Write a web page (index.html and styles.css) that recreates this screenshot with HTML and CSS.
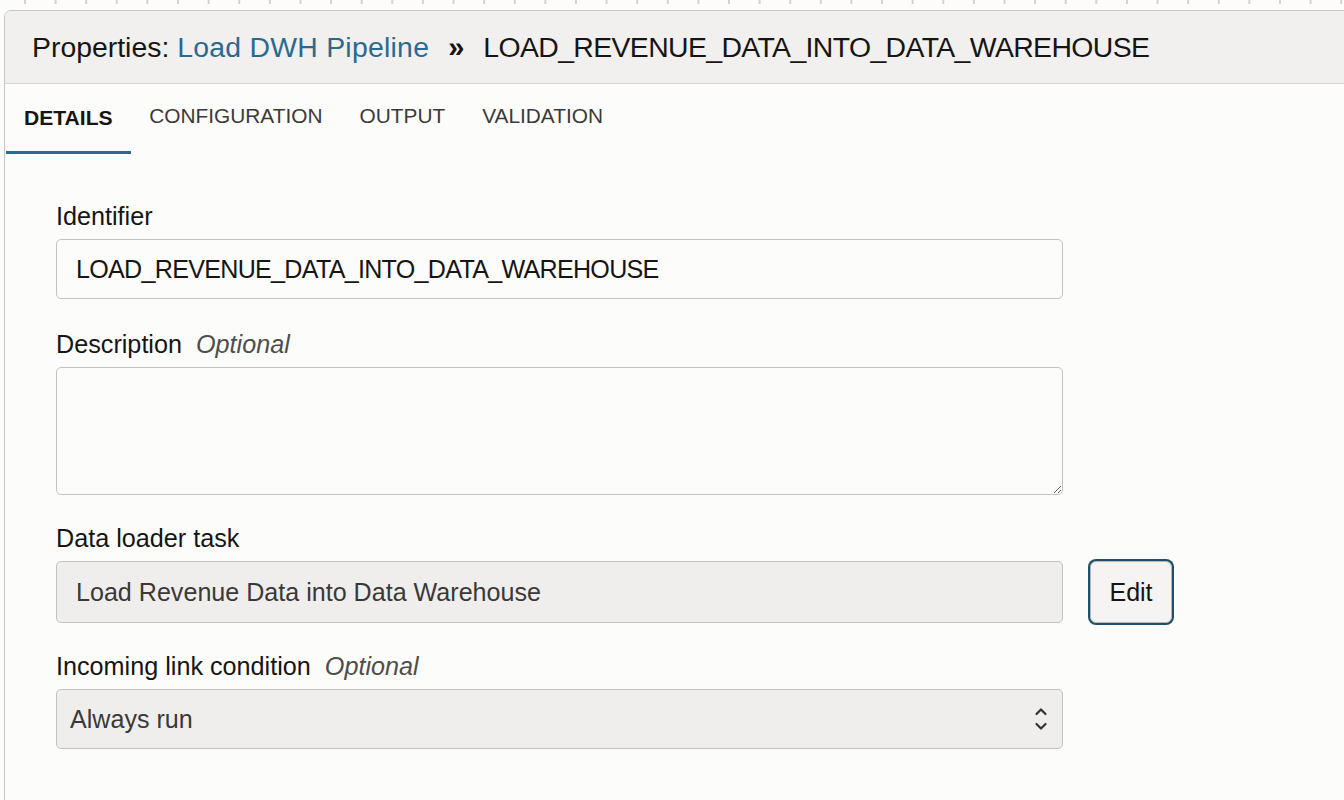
FILE: index.html
```html
<!DOCTYPE html>
<html lang="en">
<head>
<meta charset="utf-8">
<title>Properties: Load DWH Pipeline</title>
<link rel="stylesheet" href="styles.css">
</head>
<body>
<div class="canvas-strip"></div>
<section class="panel">
  <header class="panel-header">
    <h1 class="panel-title">Properties: <a class="crumb-link" href="#">Load DWH Pipeline</a><span class="crumb-sep">»</span><span class="caps-title">LOAD_REVENUE_DATA_INTO_DATA_WAREHOUSE</span></h1>
  </header>
  <nav class="tabs">
    <div class="tab tab-active">DETAILS</div>
    <div class="tab">CONFIGURATION</div>
    <div class="tab">OUTPUT</div>
    <div class="tab">VALIDATION</div>
  </nav>
  <div class="panel-body">
    <div class="field field-id">
      <label class="field-label">Identifier</label>
      <div class="text-input"><span class="caps-value">LOAD_REVENUE_DATA_INTO_DATA_WAREHOUSE</span></div>
    </div>
    <div class="field">
      <label class="field-label">Description <span class="optional">Optional</span></label>
      <textarea class="text-area"></textarea>
    </div>
    <div class="field">
      <label class="field-label">Data loader task</label>
      <div class="task-row">
        <div class="text-input text-input-disabled">Load Revenue Data into Data Warehouse</div>
        <button class="edit-btn">Edit</button>
      </div>
    </div>
    <div class="field">
      <label class="field-label">Incoming link condition <span class="optional">Optional</span></label>
      <div class="select-box">
        <span class="select-value">Always run</span>
        <svg class="select-chevrons" width="14" height="26" viewBox="0 0 14 26" aria-hidden="true">
          <path d="M2.5 8 L7 3.5 L11.5 8" fill="none" stroke="#333" stroke-width="2.2" stroke-linecap="round" stroke-linejoin="round"/>
          <path d="M2.5 18 L7 22.5 L11.5 18" fill="none" stroke="#333" stroke-width="2.2" stroke-linecap="round" stroke-linejoin="round"/>
        </svg>
      </div>
    </div>
  </div>
</section>
</body>
</html>
```

FILE: styles.css
```css
html, body {
  margin: 0;
  padding: 0;
}

body {
  background: #fcfcfb;
  font-family: "Liberation Sans", Arial, sans-serif;
  color: #161513;
  overflow: hidden;
  height: 800px;
}

.canvas-strip {
  height: 10px;
  background-image: linear-gradient(to right, #d3d2d0 2px, transparent 2px);
  background-size: 30.62px 4px;
  background-position: 24px 0;
  background-repeat: repeat-x;
}

.panel {
  margin-left: 4px;
  margin-right: -40px;
  border: 1px solid #c9c7c4;
  border-radius: 7px 7px 0 0;
  background: #fcfcfb;
  height: 900px;
  overflow: hidden;
}

.panel-header {
  height: 72px;
  background: #f1f0ef;
  border-bottom: 1px solid #d6d4d1;
  display: flex;
  align-items: center;
  padding-left: 27px;
}

.panel-title {
  margin: 0;
  font-weight: normal;
  font-size: 28.4px;
  line-height: 34px;
  color: #161513;
  white-space: nowrap;
}

.crumb-link {
  color: #2b6a8e;
  text-decoration: none;
  letter-spacing: 0.25px;
}

.crumb-sep {
  display: inline-block;
  font-size: 29px;
  font-weight: bold;
  margin: 0 19px 0 19px;
}

.caps-title {
  letter-spacing: -0.62px;
}

.tabs {
  display: flex;
  height: 70px;
  padding-left: 1px;
}

.tab {
  font-size: 20.85px;
  line-height: 24px;
  padding: 20px 18.5px 23px;
  border-bottom: 3px solid transparent;
  color: #3b3a38;
  white-space: nowrap;
}

.tab-active {
  font-size: 21.1px;
  font-weight: bold;
  color: #161513;
  padding-top: 22px;
  padding-bottom: 21px;
  padding-left: 18px;
  padding-right: 18px;
  border-bottom-color: #2a6a8b;
}

.panel-body {
  padding: 47px 0 0 51px;
}

.field {
  margin-bottom: 28px;
  width: 1007px;
}

.field-id {
  margin-bottom: 30px;
}

.field-label {
  display: block;
  font-size: 25.2px;
  line-height: 30px;
  margin-bottom: 8px;
  color: #161513;
  white-space: nowrap;
}

.optional {
  font-style: italic;
  color: #4f4d4a;
  margin-left: 7px;
}

.text-input {
  box-sizing: border-box;
  height: 60px;
  border: 1.5px solid #c5c2be;
  border-radius: 5px;
  background: #fcfcfb;
  padding-left: 19px;
  display: flex;
  align-items: center;
  font-size: 25.1px;
  color: #161513;
  white-space: nowrap;
}

.caps-value {
  letter-spacing: -0.71px;
}

.text-area {
  display: block;
  box-sizing: border-box;
  width: 100%;
  height: 128px;
  margin: 0;
  border: 1.5px solid #c5c2be;
  border-radius: 5px;
  background: #fcfcfb;
  resize: vertical;
  font-family: inherit;
  font-size: 25px;
}

.task-row {
  display: flex;
  align-items: center;
  gap: 27px;
}

.text-input-disabled {
  flex: none;
  width: 1007px;
  height: 62px;
  background: #efeeed;
  color: #3a3937;
}

.edit-btn {
  flex: none;
  box-sizing: border-box;
  width: 82px;
  height: 62px;
  border: 1px solid #b8b5b1;
  border-radius: 6px;
  background: #f5f4f3;
  box-shadow: 0 0 0 2px #1f4f6b;
  font-family: inherit;
  font-size: 25px;
  color: #161513;
  padding: 0;
}

.select-box {
  box-sizing: border-box;
  height: 60px;
  border: 1.5px solid #c5c2be;
  border-radius: 5px;
  background: #efeeed;
  display: flex;
  align-items: center;
  justify-content: space-between;
  padding: 0 14px 0 13px;
}

.select-value {
  font-size: 25.1px;
  color: #3a3937;
}

.select-chevrons {
  display: block;
}
```
